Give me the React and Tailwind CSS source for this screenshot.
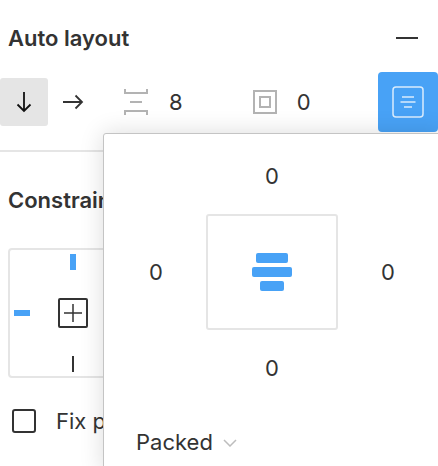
import React from 'react';

function PaddingPopover() {
  return (
    <div className="absolute left-[103px] top-[133px] w-[340px] h-[340px] bg-white rounded-tl-[3px] border border-[#c4c4c4] shadow-[0_0_24px_rgba(0,0,0,0.14)]">
      <div className="grid grid-cols-[102px_132px_100px] grid-rows-[80px_116px_80px] items-center justify-items-center">
        <div />
        <div className="text-[22px] pt-[4px]">0</div>
        <div />
        <div className="text-[22px] pl-[2px]">0</div>
        <div className="w-[132px] h-[116px] border-2 border-[#e5e5e5] rounded-[3px] flex flex-col items-center justify-center gap-[4px]">
          <div className="w-[32px] h-[10px] rounded-[2px] bg-[#48a2f6]" />
          <div className="w-[40px] h-[10px] rounded-[2px] bg-[#48a2f6]" />
          <div className="w-[24px] h-[10px] rounded-[2px] bg-[#48a2f6]" />
        </div>
        <div className="text-[22px]">0</div>
        <div />
        <div className="text-[22px] pb-[4px]">0</div>
        <div />
      </div>
      <div className="flex items-center gap-[10px] pl-[32px] pt-[16px] text-[22px]">
        <span>Packed</span>
        <svg width="14" height="8" viewBox="0 0 14 8" fill="none" stroke="#bdbdbd" strokeWidth="1.5">
          <path d="M1 1l6 6 6-6" />
        </svg>
      </div>
    </div>
  );
}

export default function App() {
  return (
    <div className="relative w-[438px] h-[466px] overflow-hidden bg-white text-[#333] font-['Inter',sans-serif]">
      <div className="flex items-center justify-between pl-[8px] pr-[20px] pt-[24px] h-[72px] pb-[20px]">
        <h2 className="text-[22px] font-semibold leading-[28px]">Auto layout</h2>
        <div className="w-[22px] h-[2px] bg-[#333]" />
      </div>

      <div className="flex items-center h-[60px]">
        <button className="w-[48px] h-[48px] rounded-[3px] bg-[#e5e5e5] flex items-center justify-center">
          <svg width="16" height="22" viewBox="0 0 16 22" fill="none" stroke="#111" strokeWidth="1.8">
            <path d="M8 1v19M1.500 13.500L8 20l6.500-6.500" />
          </svg>
        </button>
        <div className="w-[48px] h-[48px] flex items-center justify-center">
          <svg className="ml-[2px]" width="22" height="16" viewBox="0 0 22 16" fill="none" stroke="#333" strokeWidth="1.8">
            <path d="M1 8h19M13.500 1.500L20 8l-6.500 6.500" />
          </svg>
        </div>
        <svg className="ml-[28px]" width="24" height="26" viewBox="0 0 24 26" fill="none" stroke="#b3b3b3" strokeWidth="2">
          <path d="M1 0v4h22V0M6 13h12M1 26v-4h22v4" />
        </svg>
        <span className="ml-[21px] text-[22px]">8</span>
        <svg className="ml-[70px]" width="24" height="24" viewBox="0 0 24 24" fill="none" stroke="#b3b3b3" strokeWidth="2">
          <rect x="1" y="1" width="22" height="22" />
          <rect x="7" y="7" width="10" height="10" />
        </svg>
        <span className="ml-[20px] text-[22px]">0</span>
        <button className="ml-auto w-[60px] h-[60px] rounded-[4px] bg-[#48a2f6] flex items-center justify-center">
          <svg width="32" height="32" viewBox="0 0 32 32" fill="none" stroke="#d9ecfd" strokeWidth="1.500">
            <rect x="1" y="1" width="30" height="30" rx="3" />
            <path d="M10 11h12M8.500 16h15M12 21h8" />
          </svg>
        </button>
      </div>

      <div className="mt-[18px] border-t-2 border-[#e5e5e5]" />

      <div className="pl-[8px] pt-[34px]">
        <h2 className="text-[22px] font-semibold leading-[28px]">Constraints</h2>
        <div className="relative mt-[34px] w-[130px] h-[130px] border-2 border-[#e5e5e5] rounded-[4px] flex items-center justify-center">
          <div className="absolute top-[4px] left-[60px] w-[6px] h-[16px] bg-[#48a2f6]" />
          <div className="absolute left-[4px] top-[60px] w-[16px] h-[6px] bg-[#48a2f6]" />
          <div className="absolute bottom-[4px] left-[62px] w-[2px] h-[16px] bg-[#333]" />
          <div className="w-[30px] h-[30px] border-2 border-[#333] rounded-[2px] flex items-center justify-center">
            <svg width="18" height="18" viewBox="0 0 18 18" stroke="#333" strokeWidth="1.500">
              <path d="M0 9h18M9 0v18" />
            </svg>
          </div>
        </div>
        <div className="flex items-center mt-[29px] pl-[4px]">
          <div className="w-[24px] h-[24px] border-2 border-[#333] rounded-[3px]" />
          <span className="ml-[20px] text-[22px] leading-[28px] whitespace-nowrap">Fix position</span>
        </div>
      </div>

      <PaddingPopover />
    </div>
  );
}
